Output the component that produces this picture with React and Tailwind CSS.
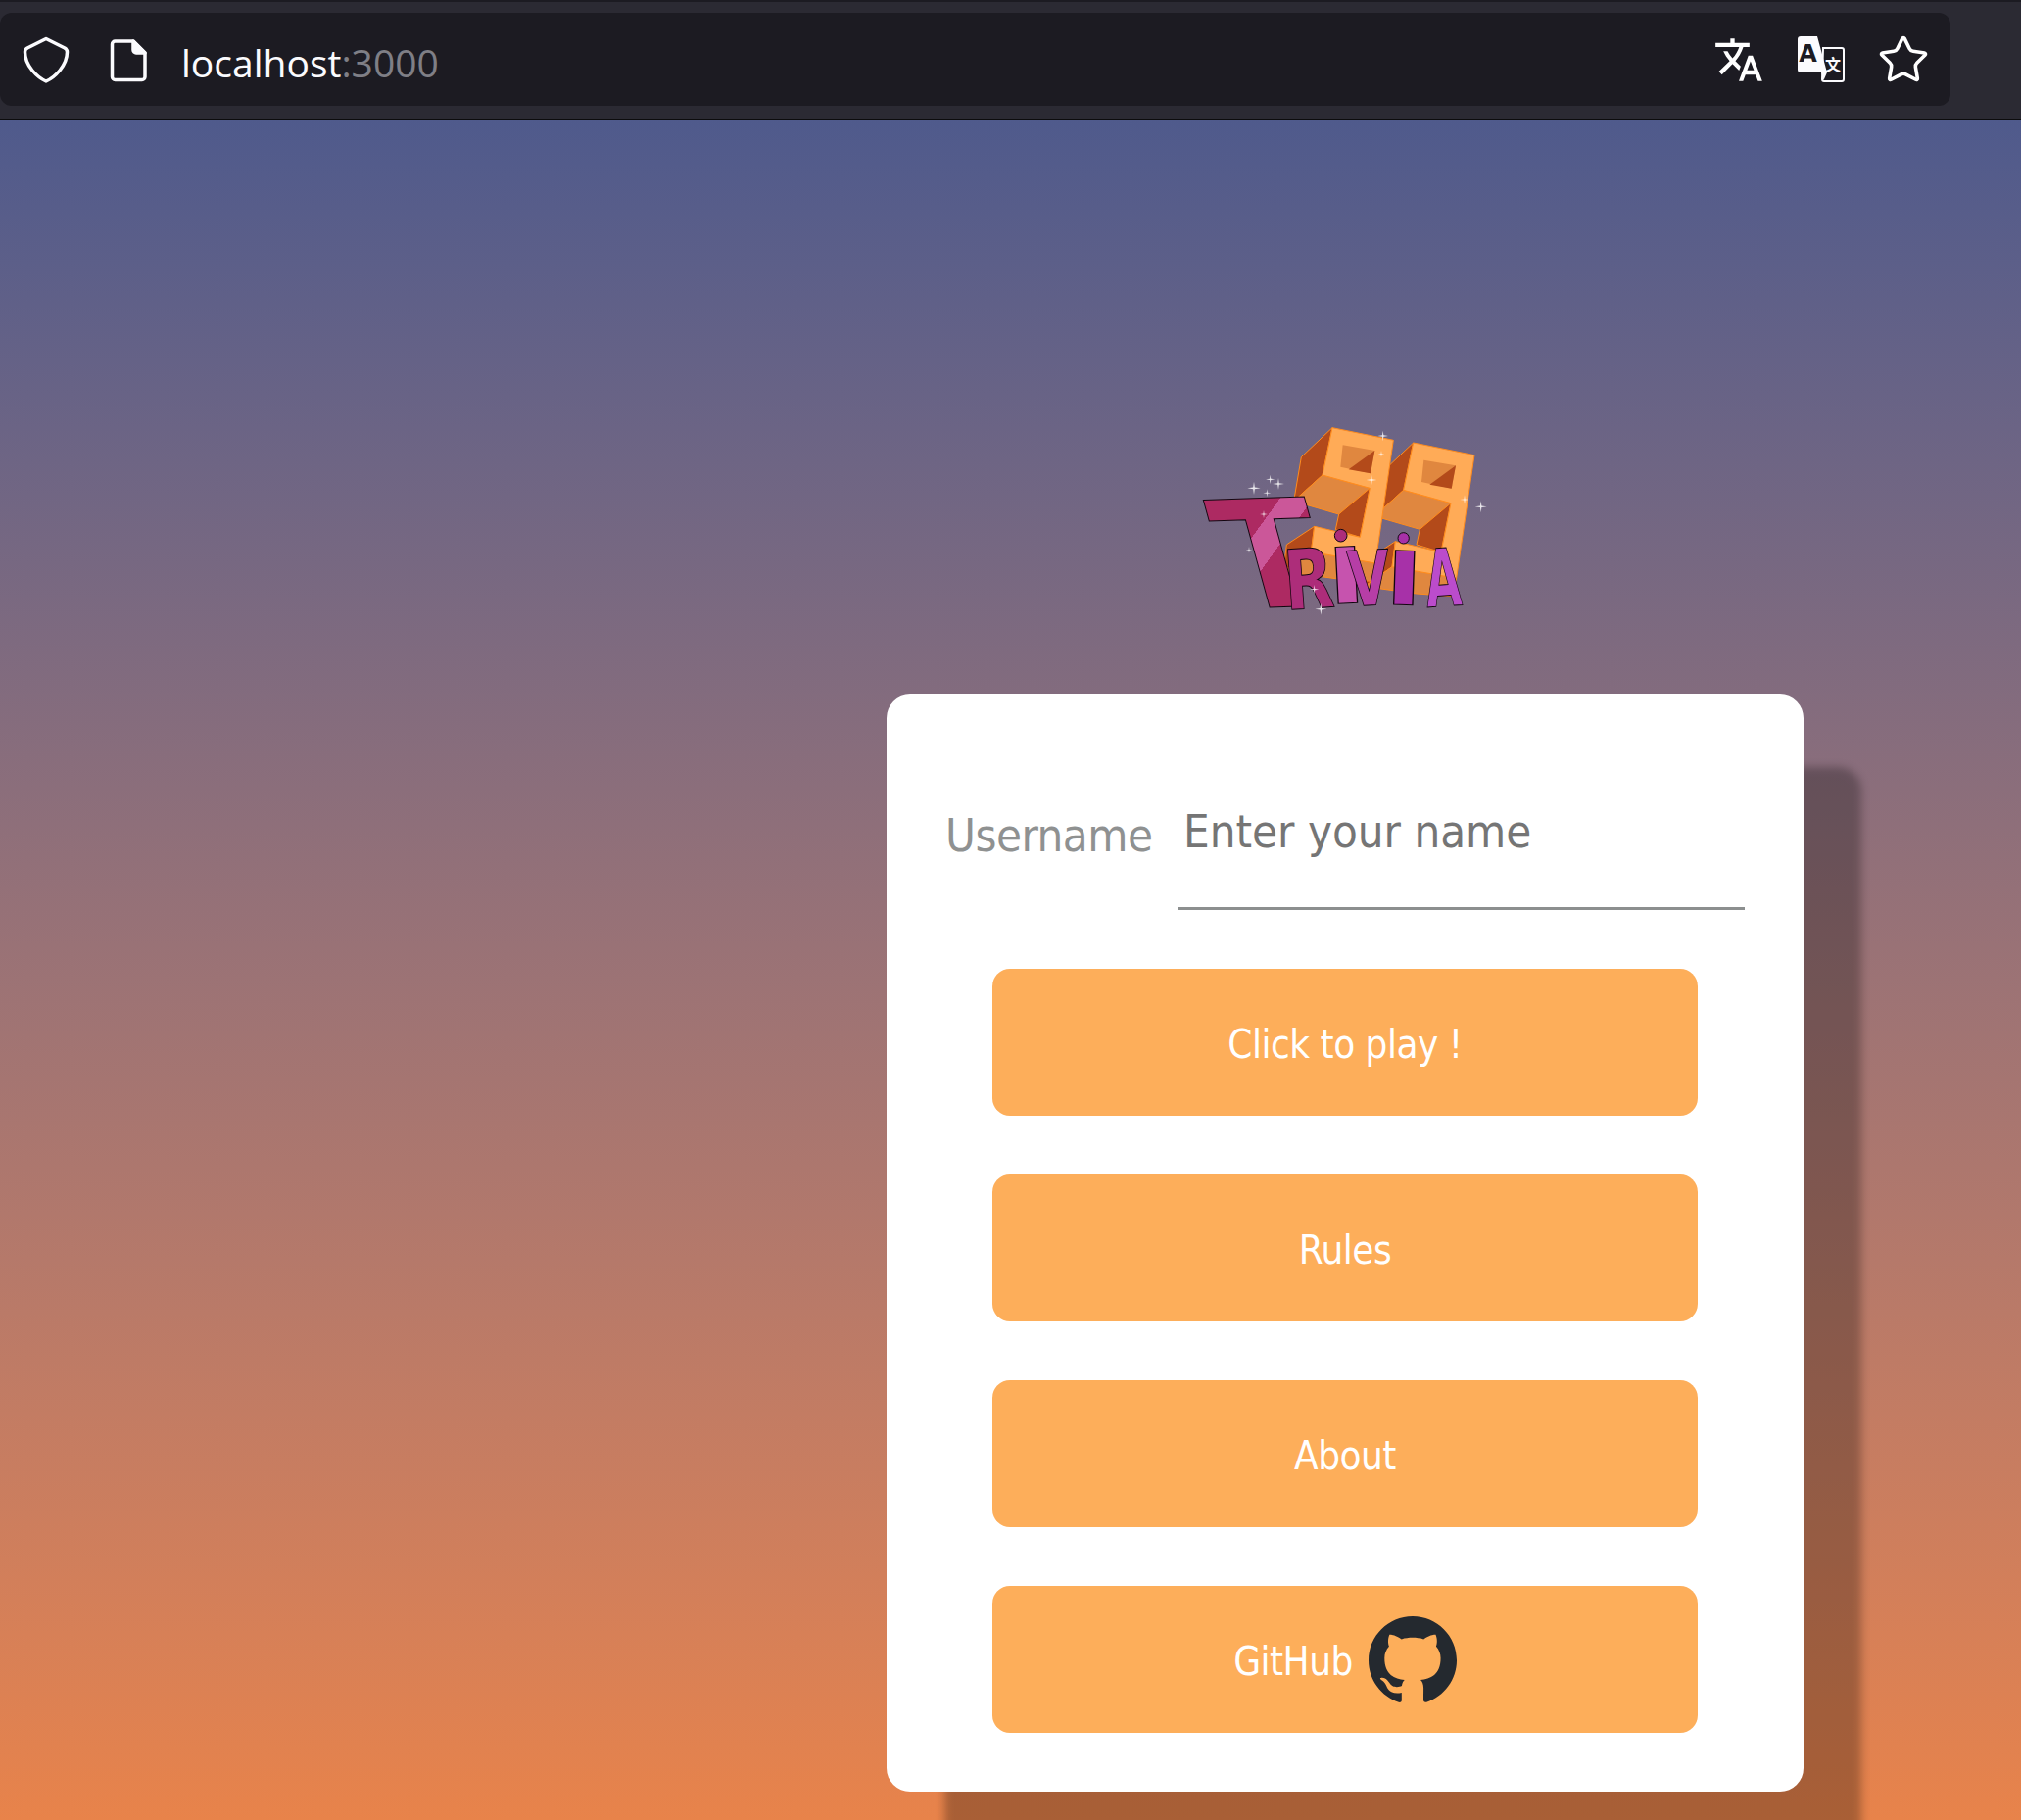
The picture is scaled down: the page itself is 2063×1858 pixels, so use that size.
import React from "react";
import { Star } from "lucide-react";
import { MdTranslate } from "react-icons/md";
import { SiGithub } from "react-icons/si";

function Nine({ id }) {
  return (
    <g id={id} stroke="#ff8c1e" strokeWidth="3" strokeLinejoin="round">
      <polygon points="480,50 385,140 362,275 450,195" fill="#b34a1a" />
      <polygon points="425,352 415,430 330,490 340,408" fill="#b34a1a" />
      <polygon points="415,430 612,465 600,520 490,512 330,490" fill="#e0873f" />
      <polygon points="450,195 362,275 500,315 595,235" fill="#e0873f" />
      <polygon points="595,235 500,315 490,362 565,385" fill="#b34a1a" />
      <polygon points="480,50 667,88 612,465 415,430 425,352 565,385 595,235 450,195" fill="#ffab57" />
      <polygon points="512,103 610,120 597,190 505,170" fill="#e0873f" stroke="none" />
      <polygon points="610,120 597,190 530,178" fill="#b34a1a" stroke="none" />
    </g>
  );
}

function Sparkle({ x, y, r = 14 }) {
  const s = r * 0.12;
  return (
    <polygon
      fill="#ffffff"
      opacity="0.85"
      points={`${x},${y - r} ${x + s},${y - s} ${x + r},${y} ${x + s},${y + s} ${x},${y + r} ${x - s},${y + s} ${x - r},${y} ${x - s},${y - s}`}
    />
  );
}

function Letter({ ch, transform, fill, size = 250 }) {
  return (
    <text
      transform={transform}
      fontSize={size}
      fontWeight="700"
      fill={fill}
      stroke="#12060f"
      strokeWidth="3"
      className="font-['DejaVu_Sans']"
    >
      {ch}
    </text>
  );
}

function Logo() {
  return (
    <svg viewBox="9 0 1020 660" className="block h-[220px] w-[340px] overflow-visible" aria-label="99 Trivia">
      <defs>
        <linearGradient id="tFill" gradientUnits="userSpaceOnUse" x1="116" y1="-214" x2="167" y2="-162">
          <stop offset="0" stopColor="#ad2a62" />
          <stop offset="0" stopColor="#cb5799" />
          <stop offset="1" stopColor="#cb5799" />
          <stop offset="1" stopColor="#ad2a62" />
        </linearGradient>
      </defs>
      <g transform="translate(248,46)">
        <Nine id="n2" />
      </g>
      <Nine id="n1" />
      <Letter ch="T" size={460} fill="url(#tFill)" transform="translate(175,604) rotate(-2) skewX(13.5)" />
      <Letter ch="R" size={254} fill="#ad2d7a" transform="translate(338,608) rotate(-4) scale(0.78,1)" />
      <Letter ch="I" size={238} fill="#c653ae" transform="translate(470,590) rotate(-3) scale(1.3,1)" />
      <Letter ch="V" size={233} fill="#b63ea6" transform="translate(530,597) rotate(-3) scale(0.72,1)" />
      <Letter ch="I" size={228} fill="#a731a8" transform="translate(640,590) rotate(2) scale(1.35,1)" />
      <Letter ch="A" size={245} fill="#bb4ccc" transform="translate(770,600) rotate(-4) scale(0.58,1)" />
      <circle cx="506" cy="380" r="19" fill="#ad2d7a" stroke="#12060f" strokeWidth="3" />
      <circle cx="698" cy="388" r="17" fill="#a731a8" stroke="#12060f" strokeWidth="3" />
      <Sparkle x={240} y={235} r={20} />
      <Sparkle x={290} y={208} r={14} />
      <Sparkle x={315} y={222} r={18} />
      <Sparkle x={280} y={250} r={12} />
      <Sparkle x={935} y={292} r={18} />
      <Sparkle x={635} y={75} r={16} />
      <Sparkle x={600} y={210} r={16} />
      <Sparkle x={630} y={130} r={10} />
      <Sparkle x={885} y={270} r={14} />
      <Sparkle x={425} y={545} r={14} />
      <Sparkle x={445} y={605} r={18} />
      <Sparkle x={270} y={315} r={12} />
      <Sparkle x={225} y={424} r={10} />
    </svg>
  );
}

function PageTranslate() {
  return (
    <svg viewBox="0 0 48 48" className="h-[48px] w-[48px]">
      <path d="M26 12 H45 a2 2 0 0 1 2 2 V44 a2 2 0 0 1 -2 2 H27 a2 2 0 0 1 -2 -2 Z" fill="#1c1b22" stroke="#fbfbfe" strokeWidth="2" />
      <path d="M3 0 H20 L30 37 H3 a3 3 0 0 1 -3 -3 V3 a3 3 0 0 1 3 -3 Z" fill="#fbfbfe" />
      <path d="M24 37 H30 L26.500 45 Z" fill="#fbfbfe" />
      <text x="10.500" y="26" fontSize="24" fontWeight="700" fill="#1c1b22" textAnchor="middle" className="font-['DejaVu_Sans']">A</text>
      <text x="36" y="35" fontSize="16" fontWeight="700" fill="#fbfbfe" textAnchor="middle" className="font-['Noto_Sans_CJK_SC']">文</text>
    </svg>
  );
}

function MenuButton({ children, icon }) {
  return (
    <button className="flex h-[150px] w-[720px] items-center justify-center gap-4 rounded-[18px] bg-[#fdae5a] font-['DejaVu_Sans'] text-[40px] tracking-[-0.5px] text-white font-stretch-condensed">
      <span className="pt-[3px]">{children}</span>
      {icon}
    </button>
  );
}

export default function App() {
  return (
    <div className="flex h-[1858px] flex-col overflow-hidden">
      <header className="h-[122px] shrink-0 border-t-[2px] border-b-[1px] border-t-[#1c1b22] border-b-[#0c0c0d] bg-[#2b2a33] pt-[11px]">
        <div className="flex h-[95px] w-[1991px] items-center rounded-[12px] bg-[#1c1b22] pr-[24px] text-white">
          <svg viewBox="0 0 48 48" fill="none" stroke="#fbfbfe" strokeWidth="3.5" strokeLinejoin="round" className="ml-[23px] h-[48px] w-[48px]">
            <path d="M24 2.500 L43 12 Q45.500 13.500 45.500 16 C45.500 30 33 42 24 46 C15 42 2.500 30 2.500 16 Q2.500 13.500 5 12 Z" />
          </svg>
          <svg viewBox="0 0 48 48" fill="none" stroke="#fbfbfe" strokeWidth="3.5" strokeLinejoin="round" className="ml-[36px] h-[48px] w-[48px]">
            <path d="M10.500 5 H29 L41 17 V41.500 a3 3 0 0 1 -3 3 H10.500 a3 3 0 0 1 -3 -3 V8 a3 3 0 0 1 3 -3 Z" />
            <path d="M29 5 L41 17 H32 a3 3 0 0 1 -3 -3 Z" fill="#fbfbfe" />
          </svg>
          <div className="ml-[30px] pt-[7px] font-['Open_Sans'] text-[39px] text-[#fbfbfe]">
            localhost<span className="text-[#7f7f86]">:3000</span>
          </div>
          <div className="ml-auto flex items-center gap-[36px]">
            <MdTranslate className="-mx-[2px] h-[52px] w-[52px]" />
            <PageTranslate />
            <Star className="-mx-[3px] h-[54px] w-[54px]" strokeWidth={1.6} />
          </div>
        </div>
      </header>
      <main className="flex grow justify-end bg-gradient-to-b from-[#4f5a8c] to-[#e8834a] pr-[222px]">
        <div className="flex w-[936px] flex-col items-center pt-[298px]">
          <Logo />
          <div className="mt-[69px] flex w-full flex-col items-center rounded-[24px] bg-white p-[60px] shadow-[59px_74px_8px_0_rgba(0,0,0,0.27)]">
            <div className="flex h-[160px] w-full items-center">
              <label className="w-[237px] shrink-0 pt-[8px] font-['DejaVu_Sans'] text-[47px] tracking-[-0.5px] text-[#8f9191] font-stretch-condensed">Username</label>
              <input
                placeholder="Enter your name"
                className="h-full min-w-0 grow border-b-[3px] border-[#8c8f8f] px-[6px] pt-[1px] font-['DejaVu_Sans'] text-[47px] font-stretch-condensed outline-none placeholder:text-[#757575]"
              />
            </div>
            <div className="mt-[60px] flex flex-col gap-[60px]">
              <MenuButton>Click to play !</MenuButton>
              <MenuButton>Rules</MenuButton>
              <MenuButton>About</MenuButton>
              <MenuButton icon={<SiGithub className="h-[90px] w-[90px] text-[#24292f]" />}>GitHub</MenuButton>
            </div>
          </div>
        </div>
      </main>
    </div>
  );
}
